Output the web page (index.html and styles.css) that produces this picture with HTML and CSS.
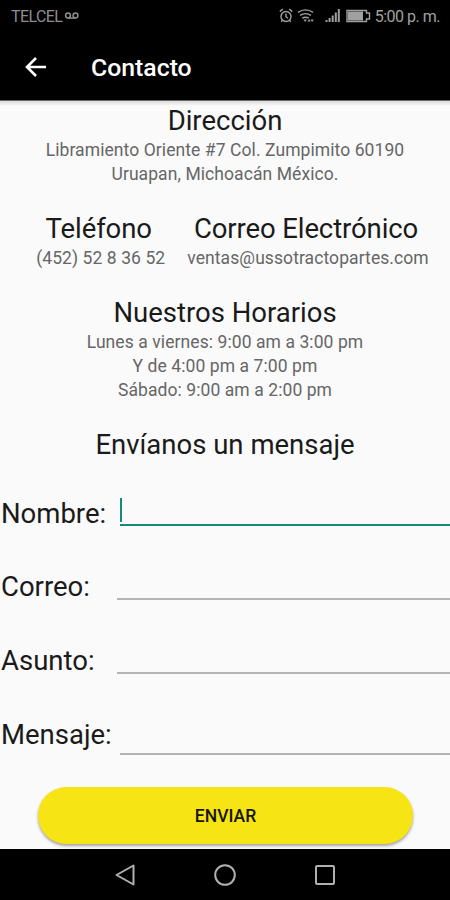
FILE: index.html
```
<!DOCTYPE html>
<html lang="es">
<head>
    <meta charset="UTF-8">
    <meta name="viewport" content="width=device-width, initial-scale=1.0">
    <title>Contacto</title>

    <link rel="stylesheet" href="styles.css">
</head>
<body>
    <div class="status">
        <span class="carrier">TELCEL</span>
        <svg class="voicemail" width="16" height="10" viewBox="0 0 16 10">
            <circle cx="4" cy="4.5" r="2.4"/>
            <circle cx="11.5" cy="4.5" r="2.4"/>
            <path d="M4 7h7.500"/>
        </svg>
        <svg class="icons" width="94" height="18" viewBox="0 0 94 18">
            <!-- alarm -->
            <g class="line">
                <circle cx="9" cy="9.5" r="5"/>
                <path d="M9 6.500v3.200l2 1.500M2.800 4.600l3-2.600M15.200 4.600l-3-2.600M5.500 13.300l-1.300 1.500M12.500 13.300l1.300 1.500"/>
            </g>
            <!-- wifi -->
            <g class="line">
                <path d="M21 5.400q7.500-5 15 0M23 8.400q5.500-3.600 11 0M25.200 11.200q3.300-2 6.600 0"/>
            </g>
            <path class="fill" d="M26.500 12.600h3.400l-1.700 2.400zM30.500 14.500l1.600-2.400 1.600 2.400zM33.500 12.600h3.200l-1.600 2.400z"/>
            <!-- signal -->
            <path class="fill" d="M48.500 13h2v2h-2zM51.600 11h2v4h-2zM54.700 8.500h2v6.500h-2zM57.800 5.500h2v9.500h-2zM60.800 2h2v13h-2z"/>
            <!-- battery -->
            <path class="line" d="M70 3.500h19.500v2.500h3v6h-3v2.500h-19.500z"/>
            <path class="fill" d="M71 4.500h15v9h-15z"/>
        </svg>
        <span class="time">5:00 p. m.</span>
    </div>

    <div class="toolbar">
        <svg class="back" width="22" height="22" viewBox="0 0 22 22">
            <path d="M21 11H2.500M11 2L2 11l9 9"/>
        </svg>
        <h1>Contacto</h1>
    </div>

    <div class="content">
        <div class="block">
            <h2>Dirección</h2>
            <p>Libramiento Oriente #7 Col. Zumpimito 60190</p>
            <p>Uruapan, Michoacán México.</p>
        </div>

        <div class="block contactos">
            <div>
                <h2>Teléfono</h2>
                <p>(452) 52 8 36 52</p>
            </div>
            <div>
                <h2>Correo Electrónico</h2>
                <p>ventas@ussotractopartes.com</p>
            </div>
        </div>

        <div class="block">
            <h2>Nuestros Horarios</h2>
            <p>Lunes a viernes: 9:00 am a 3:00 pm</p>
            <p>Y de 4:00 pm a 7:00 pm</p>
            <p>Sábado: 9:00 am a 2:00 pm</p>
        </div>

        <h2>Envíanos un mensaje</h2>

        <div class="formulario">
            <div class="campo activo">
                <label>Nombre:</label>
                <div class="entrada"><span class="cursor"></span></div>
            </div>
            <div class="campo">
                <label>Correo:</label>
                <div class="entrada"></div>
            </div>
            <div class="campo">
                <label>Asunto:</label>
                <div class="entrada"></div>
            </div>
            <div class="campo mensaje">
                <label>Mensaje:</label>
                <div class="entrada"></div>
            </div>
        </div>

        <button class="btn">ENVIAR</button>
    </div>

    <div class="navbar">
        <svg width="22" height="24" viewBox="0 0 22 24"><path d="M19.500 2.500v19L2.500 12z"/></svg>
        <svg width="24" height="24" viewBox="0 0 24 24"><circle cx="12" cy="12" r="9.800"/></svg>
        <svg width="22" height="24" viewBox="0 0 22 24"><rect x="2" y="3" width="18" height="18" rx="1"/></svg>
    </div>
</body>
</html>
```
FILE: styles.css
```
*{
    box-sizing: border-box;
}
body{
    margin: 0;
    width: 450px;
    height: 900px;
    display: flex;
    flex-direction: column;
    overflow: hidden;
    background-color: #fafafa;
    font-family: Roboto, sans-serif;
}
h1, h2, p{
    margin: 0;
    font-weight: 400;
    white-space: nowrap;
}

.status{
    height: 32px;
    display: flex;
    align-items: center;
    padding: 0 10px 0 11px;
    background-color: #000;
    color: #8e8e8e;
    font-size: 16px;
}
.carrier{
    letter-spacing: -0.6px;
}
.voicemail{
    margin-left: 2px;
    fill: none;
    stroke: #8e8e8e;
    stroke-width: 1.5;
}
.icons{
    margin-left: auto;
    margin-right: 4px;
}
.icons .line{
    fill: none;
    stroke: #a0a0a0;
    stroke-width: 1.4;
}
.icons .fill{
    fill: #a0a0a0;
}
.time{
    color: #a0a0a0;
    letter-spacing: -0.5px;
}

.toolbar{
    height: 68px;
    display: flex;
    align-items: center;
    gap: 44px;
    padding: 1px 0 0 25px;
    background-color: #000;
    color: #fff;
}
.back{
    fill: none;
    stroke: #fff;
    stroke-width: 2.6;
}
h1{
    padding-top: 2px;
    font-size: 24.8px;
    font-weight: 500;
    line-height: 30px;
}

.content{
    flex: 1;
    border-top: 1px solid #6b696a;
    padding-top: 4px;
    background: linear-gradient(#dcdcdc, #fafafa 5px);
    text-align: center;
}
h2{
    height: 33px;
    font-size: 27.5px;
    line-height: 32px;
    color: #1a1a1a;
}
p{
    font-size: 17.5px;
    line-height: 24px;
    letter-spacing: 0.08px;
    color: #666;
}
.block{
    margin-bottom: 27px;
}
.contactos{
    display: flex;
    justify-content: center;
    gap: 22px;
    padding-left: 15px;
}
.contactos h2{
    padding-right: 4px;
    letter-spacing: -0.1px;
}

.formulario{
    padding-top: 15px;
}
.campo{
    height: 74px;
    display: flex;
    align-items: flex-start;
}
.campo label{
    width: 117px;
    padding: 20px 0 0 1px;
    font-size: 27.5px;
    line-height: 32px;
    color: #1a1a1a;
    text-align: left;
}
.entrada{
    flex: 1;
    height: 49px;
    border-bottom: 2px solid #b4b4b4;
}
.activo label, .mensaje label{
    width: 120px;
}
.activo label{
    padding-top: 21px;
}
.activo .entrada{
    height: 49px;
    border-color: #15897c;
}
.mensaje .entrada{
    height: 56px;
}
.cursor{
    display: block;
    width: 2px;
    height: 24px;
    margin-top: 21px;
    background-color: #15897c;
}

.btn{
    display: block;
    width: 375px;
    height: 57px;
    margin: 14px 0 0 38px;
    border: none;
    border-radius: 29px;
    background-color: #f7e415;
    box-shadow: 0 2px 3px rgba(0, 0, 0, 0.35);
    color: #151500;
    font-family: inherit;
    font-size: 17.5px;
    font-weight: 500;
}

.navbar{
    height: 51px;
    display: flex;
    justify-content: center;
    align-items: center;
    gap: 77px;
    background-color: #000;
}
.navbar svg{
    fill: none;
    stroke: #b0b0b0;
    stroke-width: 2;
    stroke-linejoin: round;
}
```
